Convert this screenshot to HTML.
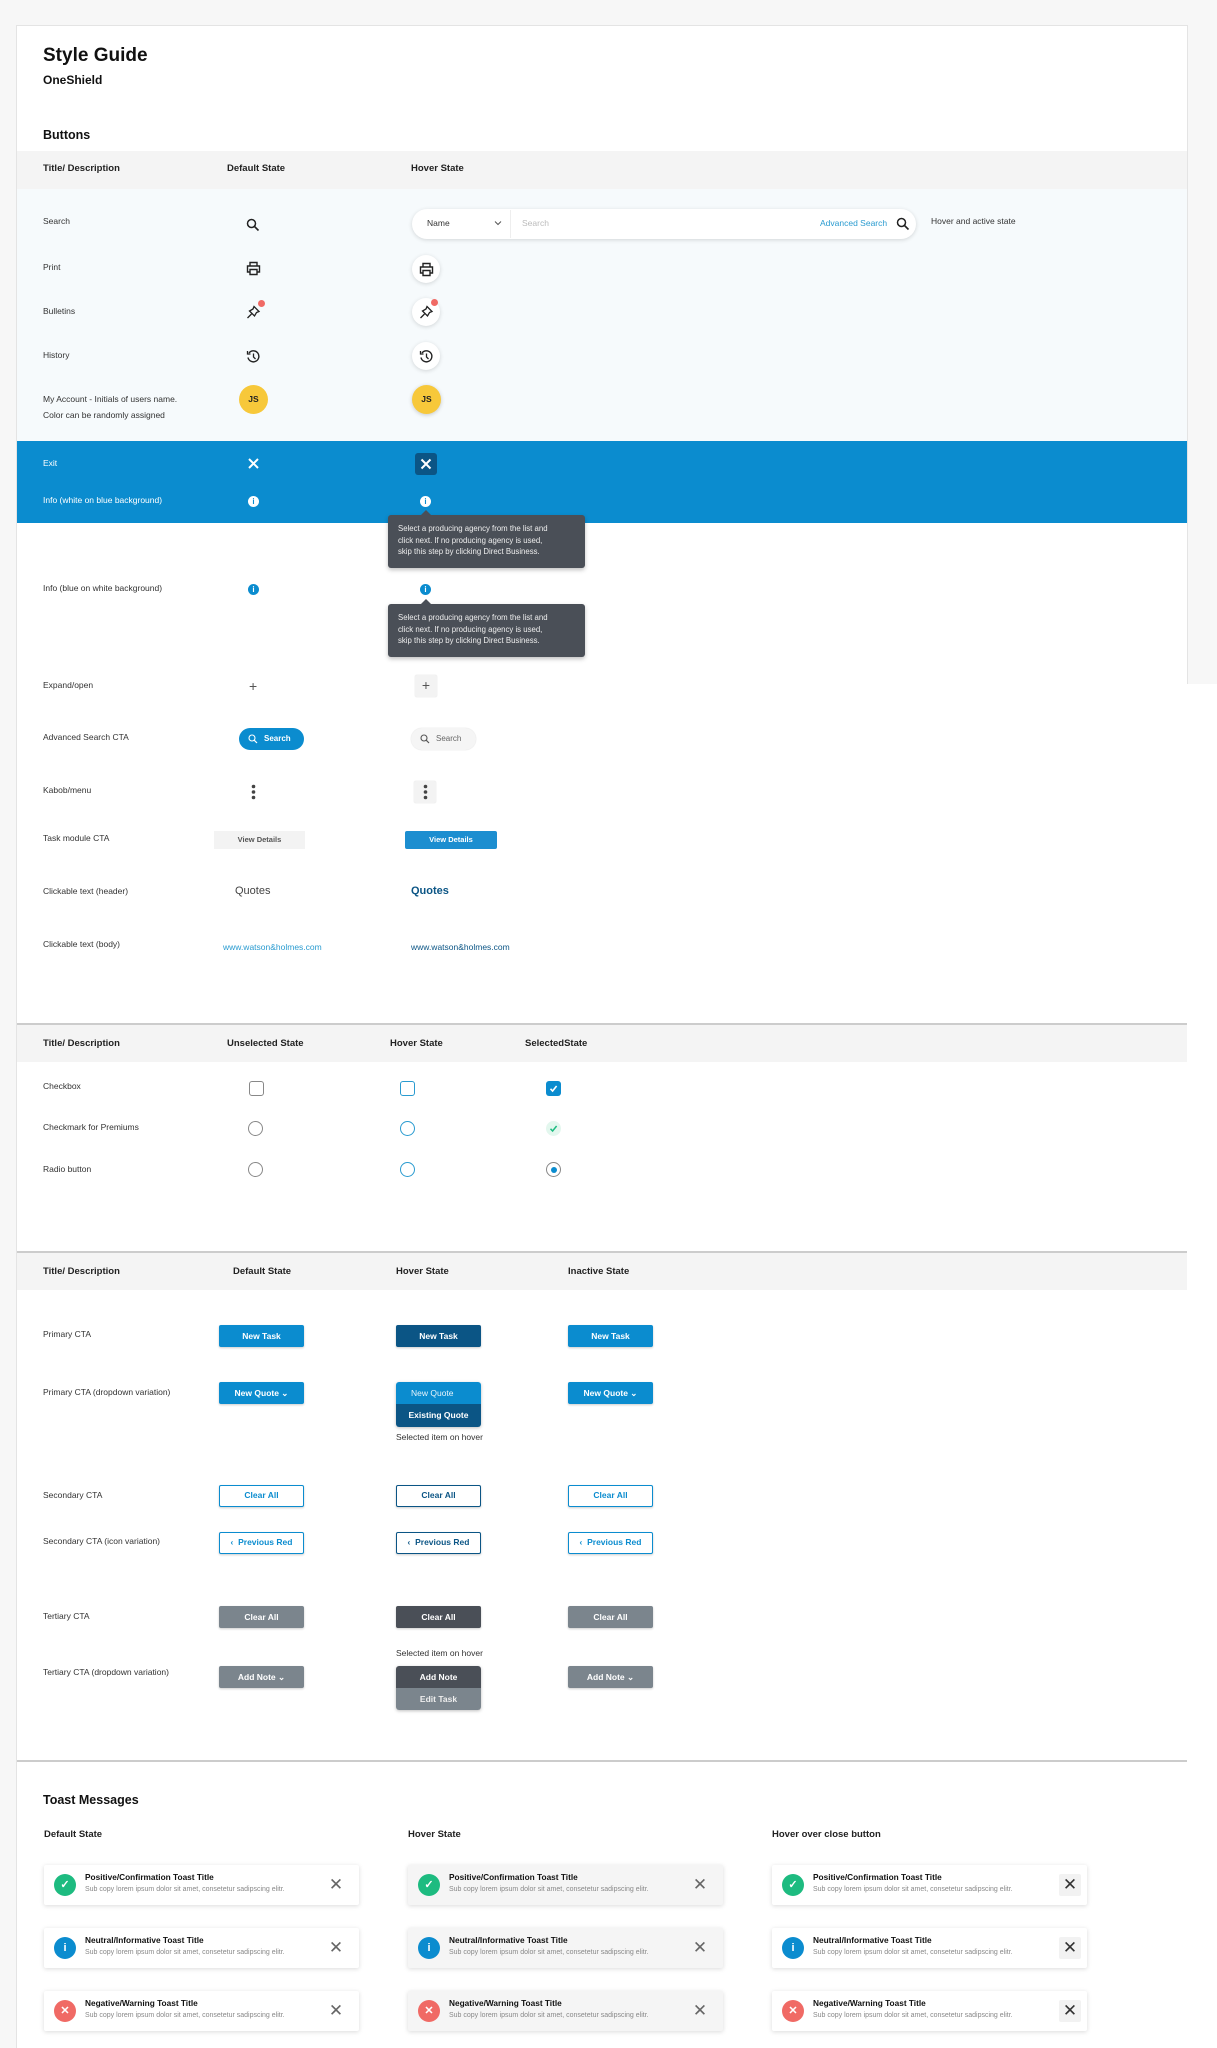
<!DOCTYPE html>
<html><head><meta charset="utf-8">
<style>
*{margin:0;padding:0;box-sizing:border-box}
body{width:1217px;height:2048px;background:linear-gradient(#f7f7f7 0,#f7f7f7 684px,#fff 684px);font-family:"Liberation Sans",sans-serif;color:#222;position:relative;overflow:hidden}
.a{position:absolute}
.t{position:absolute;white-space:nowrap;font-size:8.5px;line-height:11px;color:#333}
.h{position:absolute;white-space:nowrap;font-size:9.5px;line-height:12px;font-weight:bold;color:#222}
.btn{position:absolute;width:85px;height:22px;border-radius:2px;font-size:8.5px;font-weight:bold;line-height:22px;text-align:center;color:#fff;box-shadow:0 1px 2px rgba(0,0,0,.2)}
.pri{background:#0b8ccf}.prh{background:#0b5585}
.sec{background:#fff;border:1.5px solid #0b8ccf;color:#0b8ccf;line-height:19px}
.sech{background:#fff;border:1.5px solid #0b5585;color:#0b5585;line-height:19px}
.ter{background:#7b858d}.terh{background:#4a4f57}
.tip{position:absolute;width:197px;height:53px;background:#4a4f57;border-radius:3px;color:#eee;font-size:7.8px;line-height:11.5px;padding:8px 10px;box-shadow:0 2px 4px rgba(0,0,0,.25)}
.tip:before{content:"";position:absolute;left:33px;top:-5px;border:5px solid transparent;border-top:0;border-bottom-color:#4a4f57}
.toast{position:absolute;width:315px;height:40px;background:#fff;box-shadow:0 1px 5px rgba(0,0,0,.15);border-radius:2px}
.toast.hv{background:#f5f5f5}
.toast .ic{position:absolute;left:10px;top:9px;width:22px;height:22px;border-radius:50%;color:#fff;font-size:11px;font-weight:bold;text-align:center;line-height:22px}
.toast .tt{position:absolute;left:41px;top:7px;font-size:8.3px;font-weight:bold;color:#111;white-space:nowrap}
.toast .ts{position:absolute;left:41px;top:21px;font-size:7px;color:#888;white-space:nowrap}
.toast .x{position:absolute;right:12px;top:9px;width:22px;height:22px;text-align:center;line-height:22px;font-size:17px;color:#666}
.toast .x.b{background:#f2f2f2;border-radius:2px;color:#333;right:6px}
.g{background:#1dbb80}.i{background:#0b8ccf}.r{background:#f06a65}
.circ{position:absolute;width:28px;height:28px;border-radius:50%;background:#fff;box-shadow:0 1px 4px rgba(0,0,0,.15)}
</style></head><body>
<div class="a" style="left:0;top:0;width:16px;height:2048px;background:#f7f7f7"></div>
<div class="a" style="left:16px;top:25px;width:1172px;height:2023px;background:#fff;border-left:1px solid #e4e4e4;border-top:1px solid #e4e4e4"></div>
<div class="a" style="left:1187px;top:25px;width:1px;height:659px;background:#e4e4e4"></div>

<div class="t" style="left:43px;top:45px;font-size:19px;line-height:22px;font-weight:bold;color:#111">Style Guide</div>
<div class="t" style="left:43px;top:73px;font-size:12px;line-height:14px;font-weight:bold;color:#111">OneShield</div>
<div class="t" style="left:43px;top:128px;font-size:12.5px;line-height:15px;font-weight:bold;color:#111">Buttons</div>

<div class="a" style="left:17px;top:151px;width:1170px;height:38px;background:#f4f4f4"></div>
<div class="h" style="left:43px;top:163px">Title/ Description</div>
<div class="h" style="left:227px;top:163px">Default State</div>
<div class="h" style="left:411px;top:163px">Hover State</div>
<div class="a" style="left:17px;top:189px;width:1170px;height:252px;background:#f6fafc"></div>

<div class="t" style="left:43px;top:216px">Search</div>
<svg class="a" style="left:246px;top:218px" width="14" height="14" viewBox="0 0 14 14"><circle cx="5.5" cy="5.5" r="4" fill="none" stroke="#222" stroke-width="1.5"/><path d="M8.5 8.5L12.5 12.5" stroke="#222" stroke-width="1.6"/></svg>
<div class="a" style="left:412px;top:209px;width:504px;height:30px;background:#fff;border-radius:15px;box-shadow:0 1px 4px rgba(0,0,0,.15)"></div>
<div class="t" style="left:427px;top:218px;color:#333">Name</div>
<svg class="a" style="left:494px;top:220px" width="8" height="6" viewBox="0 0 8 6"><path d="M1 1.5L4 4.5L7 1.5" fill="none" stroke="#555" stroke-width="1"/></svg>
<div class="a" style="left:510px;top:210px;width:1px;height:28px;background:#eee"></div>
<div class="t" style="left:522px;top:218px;color:#bbb">Search</div>
<div class="t" style="left:820px;top:218px;color:#2a9bd0">Advanced Search</div>
<svg class="a" style="left:896px;top:217px" width="14" height="14" viewBox="0 0 14 14"><circle cx="5.5" cy="5.5" r="4" fill="none" stroke="#222" stroke-width="1.5"/><path d="M8.5 8.5L12.5 12.5" stroke="#222" stroke-width="1.6"/></svg>
<div class="t" style="left:931px;top:216px">Hover and active state</div>

<div class="t" style="left:43px;top:262px">Print</div>
<svg class="a" style="left:246px;top:261px" width="15" height="15" viewBox="0 0 15 15"><path d="M4 5V1.5h7V5M4 11H1.5V5h12v6H11M4 8.5h7v5H4z" fill="none" stroke="#222" stroke-width="1.4"/></svg>
<div class="circ" style="left:412px;top:255px"></div>
<svg class="a" style="left:419px;top:262px" width="15" height="15" viewBox="0 0 15 15"><path d="M4 5V1.5h7V5M4 11H1.5V5h12v6H11M4 8.5h7v5H4z" fill="none" stroke="#222" stroke-width="1.4"/></svg>

<div class="t" style="left:43px;top:306px">Bulletins</div>
<svg class="a" style="left:246px;top:305px" width="15" height="15" viewBox="0 0 15 15"><path d="M8 1.5L13 6.5L10.5 7.5L8.5 11L3.5 6L7 4z M5.5 9L1.5 13" fill="none" stroke="#222" stroke-width="1.3"/></svg>
<div class="a" style="left:258px;top:300px;width:7px;height:7px;border-radius:50%;background:#f06a65"></div>
<div class="circ" style="left:412px;top:298px"></div>
<svg class="a" style="left:419px;top:305px" width="15" height="15" viewBox="0 0 15 15"><path d="M8 1.5L13 6.5L10.5 7.5L8.5 11L3.5 6L7 4z M5.5 9L1.5 13" fill="none" stroke="#222" stroke-width="1.3"/></svg>
<div class="a" style="left:431px;top:299px;width:7px;height:7px;border-radius:50%;background:#f06a65"></div>

<div class="t" style="left:43px;top:350px">History</div>
<svg class="a" style="left:246px;top:349px" width="15" height="15" viewBox="0 0 15 15"><path d="M3 4A5.5 5.5 0 1 1 2 8.5" fill="none" stroke="#222" stroke-width="1.4"/><path d="M1.5 2V5H4.5" fill="none" stroke="#222" stroke-width="1.3"/><path d="M7.5 4.5V8L9.5 10" fill="none" stroke="#222" stroke-width="1.3"/></svg>
<div class="circ" style="left:412px;top:342px"></div>
<svg class="a" style="left:419px;top:349px" width="15" height="15" viewBox="0 0 15 15"><path d="M3 4A5.5 5.5 0 1 1 2 8.5" fill="none" stroke="#222" stroke-width="1.4"/><path d="M1.5 2V5H4.5" fill="none" stroke="#222" stroke-width="1.3"/><path d="M7.5 4.5V8L9.5 10" fill="none" stroke="#222" stroke-width="1.3"/></svg>

<div class="t" style="left:43px;top:391px;line-height:16px">My Account - Initials of users name.<br>Color can be randomly assigned</div>
<div class="a" style="left:239px;top:385px;width:29px;height:29px;border-radius:50%;background:#f7c83a;font-size:8.5px;font-weight:bold;text-align:center;line-height:29px">JS</div>
<div class="a" style="left:412px;top:385px;width:29px;height:29px;border-radius:50%;background:#f7c83a;font-size:8.5px;font-weight:bold;text-align:center;line-height:29px;box-shadow:0 1px 4px rgba(0,0,0,.2)">JS</div>

<div class="a" style="left:17px;top:441px;width:1170px;height:82px;background:#0b8ccf"></div>
<div class="t" style="left:43px;top:458px;color:#fff">Exit</div>
<svg class="a" style="left:247px;top:457px" width="13" height="13" viewBox="0 0 13 13"><path d="M2 2L11 11M11 2L2 11" stroke="#fff" stroke-width="2"/></svg>
<div class="a" style="left:415px;top:453px;width:22px;height:22px;border-radius:3px;background:#0b5585"></div>
<svg class="a" style="left:420px;top:458px" width="12" height="12" viewBox="0 0 12 12"><path d="M1.5 1.5L10.5 10.5M10.5 1.5L1.5 10.5" stroke="#fff" stroke-width="2"/></svg>
<div class="t" style="left:43px;top:495px;color:#fff">Info (white on blue background)</div>
<div class="a" style="left:248px;top:496px;width:11px;height:11px;border-radius:50%;background:#fff;color:#0b8ccf;font-size:8px;font-weight:bold;text-align:center;line-height:11px">i</div>
<div class="a" style="left:420px;top:496px;width:11px;height:11px;border-radius:50%;background:#fff;color:#0b8ccf;font-size:8px;font-weight:bold;text-align:center;line-height:11px">i</div>
<div class="tip" style="left:388px;top:515px">Select a producing agency from the list and<br>click next. If no producing agency is used,<br>skip this step by clicking Direct Business.</div>

<div class="t" style="left:43px;top:583px">Info (blue on white background)</div>
<div class="a" style="left:248px;top:584px;width:11px;height:11px;border-radius:50%;background:#0b8ccf;color:#fff;font-size:8px;font-weight:bold;text-align:center;line-height:11px">i</div>
<div class="a" style="left:420px;top:584px;width:11px;height:11px;border-radius:50%;background:#0b8ccf;color:#fff;font-size:8px;font-weight:bold;text-align:center;line-height:11px">i</div>
<div class="tip" style="left:388px;top:604px">Select a producing agency from the list and<br>click next. If no producing agency is used,<br>skip this step by clicking Direct Business.</div>

<div class="t" style="left:43px;top:680px">Expand/open</div>
<div class="t" style="left:249px;top:678px;font-size:14px;line-height:16px;color:#555">+</div>
<div class="a" style="left:415px;top:675px;width:22px;height:22px;border-radius:2px;background:#f3f3f3;box-shadow:0 0 1px rgba(0,0,0,.2);text-align:center;line-height:21px;font-size:14px;color:#555">+</div>

<div class="t" style="left:43px;top:732px">Advanced Search CTA</div>
<div class="a" style="left:239px;top:728px;width:65px;height:22px;border-radius:11px;background:#0b8ccf"></div>
<svg class="a" style="left:248px;top:734px" width="10" height="10" viewBox="0 0 10 10"><circle cx="4" cy="4" r="3" fill="none" stroke="#fff" stroke-width="1.1"/><path d="M6.2 6.2L9 9" stroke="#fff" stroke-width="1.2"/></svg>
<div class="t" style="left:264px;top:733px;color:#fff;font-weight:bold;font-size:8px">Search</div>
<div class="a" style="left:411px;top:728px;width:65px;height:22px;border-radius:11px;background:#f5f5f5;box-shadow:0 0 1px rgba(0,0,0,.2)"></div>
<svg class="a" style="left:420px;top:734px" width="10" height="10" viewBox="0 0 10 10"><circle cx="4" cy="4" r="3" fill="none" stroke="#555" stroke-width="1.1"/><path d="M6.2 6.2L9 9" stroke="#555" stroke-width="1.2"/></svg>
<div class="t" style="left:436px;top:733px;color:#666;font-size:8px">Search</div>

<div class="t" style="left:43px;top:785px">Kabob/menu</div>
<svg class="a" style="left:251px;top:784px" width="5" height="16" viewBox="0 0 5 16"><circle cx="2.5" cy="2.5" r="1.8" fill="#444"/><circle cx="2.5" cy="8" r="1.8" fill="#444"/><circle cx="2.5" cy="13.5" r="1.8" fill="#444"/></svg>
<div class="a" style="left:414px;top:781px;width:22px;height:22px;border-radius:2px;background:#f3f3f3;box-shadow:0 0 1px rgba(0,0,0,.2)"></div>
<svg class="a" style="left:423px;top:784px" width="5" height="16" viewBox="0 0 5 16"><circle cx="2.5" cy="2.5" r="1.8" fill="#444"/><circle cx="2.5" cy="8" r="1.8" fill="#444"/><circle cx="2.5" cy="13.5" r="1.8" fill="#444"/></svg>

<div class="t" style="left:43px;top:833px">Task module CTA</div>
<div class="a" style="left:214px;top:831px;width:91px;height:18px;background:#f3f3f3;font-size:7.5px;font-weight:bold;color:#555;text-align:center;line-height:18px">View Details</div>
<div class="a" style="left:405px;top:831px;width:92px;height:18px;background:#1c8ed0;border-radius:2px;font-size:7.5px;font-weight:bold;color:#fff;text-align:center;line-height:18px">View Details</div>

<div class="t" style="left:43px;top:886px">Clickable text (header)</div>
<div class="t" style="left:235px;top:884px;font-size:11px;line-height:14px;color:#444">Quotes</div>
<div class="t" style="left:411px;top:884px;font-size:11px;line-height:14px;color:#0b5585;font-weight:bold">Quotes</div>
<div class="t" style="left:43px;top:939px">Clickable text (body)</div>
<div class="t" style="left:223px;top:942px;color:#2a9bd0">www.watson&amp;holmes.com</div>
<div class="t" style="left:411px;top:942px;color:#0b5585">www.watson&amp;holmes.com</div>

<div class="a" style="left:17px;top:1023px;width:1170px;height:2px;background:#ccc"></div>
<div class="a" style="left:17px;top:1025px;width:1170px;height:37px;background:#f4f4f4"></div>
<div class="h" style="left:43px;top:1038px">Title/ Description</div>
<div class="h" style="left:227px;top:1038px">Unselected State</div>
<div class="h" style="left:390px;top:1038px">Hover State</div>
<div class="h" style="left:525px;top:1038px">SelectedState</div>
<div class="t" style="left:43px;top:1081px">Checkbox</div>
<div class="a" style="left:249px;top:1081px;width:15px;height:15px;border:1.5px solid #888;border-radius:3px"></div>
<div class="a" style="left:400px;top:1081px;width:15px;height:15px;border:1.5px solid #2a9bd0;border-radius:3px"></div>
<div class="a" style="left:546px;top:1081px;width:15px;height:15px;background:#0b8ccf;border-radius:3px"></div>
<svg class="a" style="left:549px;top:1084px" width="9" height="9" viewBox="0 0 9 9"><path d="M1.5 4.8L3.6 7L7.6 2" fill="none" stroke="#fff" stroke-width="1.6"/></svg>
<div class="t" style="left:43px;top:1122px">Checkmark for Premiums</div>
<div class="a" style="left:248px;top:1121px;width:15px;height:15px;border:1.5px solid #888;border-radius:50%"></div>
<div class="a" style="left:400px;top:1121px;width:15px;height:15px;border:1.5px solid #2a9bd0;border-radius:50%"></div>
<div class="a" style="left:546px;top:1121px;width:15px;height:15px;background:#e3f7ee;border-radius:50%"></div>
<svg class="a" style="left:549px;top:1124px" width="9" height="9" viewBox="0 0 9 9"><path d="M1.5 4.8L3.6 7L7.6 2" fill="none" stroke="#1dbb80" stroke-width="1.5"/></svg>
<div class="t" style="left:43px;top:1164px">Radio button</div>
<div class="a" style="left:248px;top:1162px;width:15px;height:15px;border:1.5px solid #888;border-radius:50%"></div>
<div class="a" style="left:400px;top:1162px;width:15px;height:15px;border:1.5px solid #2a9bd0;border-radius:50%"></div>
<div class="a" style="left:546px;top:1162px;width:15px;height:15px;border:1.5px solid #888;border-radius:50%"></div>
<div class="a" style="left:550.5px;top:1166.5px;width:6px;height:6px;background:#0b8ccf;border-radius:50%"></div>

<div class="a" style="left:17px;top:1251px;width:1170px;height:2px;background:#ccc"></div>
<div class="a" style="left:17px;top:1253px;width:1170px;height:37px;background:#f4f4f4"></div>
<div class="h" style="left:43px;top:1266px">Title/ Description</div>
<div class="h" style="left:233px;top:1266px">Default State</div>
<div class="h" style="left:396px;top:1266px">Hover State</div>
<div class="h" style="left:568px;top:1266px">Inactive State</div>

<div class="t" style="left:43px;top:1329px">Primary CTA</div>
<div class="btn pri" style="left:219px;top:1325px">New Task</div>
<div class="btn prh" style="left:396px;top:1325px">New Task</div>
<div class="btn pri" style="left:568px;top:1325px">New Task</div>

<div class="t" style="left:43px;top:1387px">Primary CTA (dropdown variation)</div>
<div class="btn pri" style="left:219px;top:1382px">New Quote &#8964;</div>
<div class="a" style="left:396px;top:1382px;width:85px;height:45px;border-radius:3px;overflow:hidden;box-shadow:0 1px 3px rgba(0,0,0,.25)">
<div style="height:22px;background:#0b8ccf;color:#e8f4fb;font-size:8.5px;line-height:22px;padding-left:15px">New Quote</div>
<div style="height:23px;background:#0b5585;color:#fff;font-size:8.5px;font-weight:bold;line-height:23px;text-align:center">Existing Quote</div></div>
<div class="t" style="left:396px;top:1432px;color:#333">Selected item on hover</div>
<div class="btn pri" style="left:568px;top:1382px">New Quote &#8964;</div>

<div class="t" style="left:43px;top:1490px">Secondary CTA</div>
<div class="btn sec" style="left:219px;top:1485px">Clear All</div>
<div class="btn sech" style="left:396px;top:1485px">Clear All</div>
<div class="btn sec" style="left:568px;top:1485px">Clear All</div>
<div class="t" style="left:43px;top:1536px">Secondary CTA (icon variation)</div>
<div class="btn sec" style="left:219px;top:1532px">&#8249;&nbsp; Previous Red</div>
<div class="btn sech" style="left:396px;top:1532px">&#8249;&nbsp; Previous Red</div>
<div class="btn sec" style="left:568px;top:1532px">&#8249;&nbsp; Previous Red</div>

<div class="t" style="left:43px;top:1611px">Tertiary CTA</div>
<div class="btn ter" style="left:219px;top:1606px">Clear All</div>
<div class="btn terh" style="left:396px;top:1606px">Clear All</div>
<div class="btn ter" style="left:568px;top:1606px">Clear All</div>
<div class="t" style="left:396px;top:1648px;color:#333">Selected item on hover</div>
<div class="t" style="left:43px;top:1667px">Tertiary CTA (dropdown variation)</div>
<div class="btn ter" style="left:219px;top:1666px">Add Note &#8964;</div>
<div class="a" style="left:396px;top:1666px;width:85px;height:44px;border-radius:3px;overflow:hidden;box-shadow:0 1px 3px rgba(0,0,0,.25)">
<div style="height:22px;background:#4a4f57;color:#fff;font-size:8.5px;font-weight:bold;line-height:22px;text-align:center">Add Note</div>
<div style="height:22px;background:#7b858d;color:#eee;font-size:8.5px;font-weight:bold;line-height:22px;text-align:center">Edit Task</div></div>
<div class="btn ter" style="left:568px;top:1666px">Add Note &#8964;</div>

<div class="a" style="left:17px;top:1760px;width:1170px;height:2px;background:#ccc"></div>
<div class="t" style="left:43px;top:1793px;font-size:12.5px;line-height:15px;font-weight:bold;color:#111">Toast Messages</div>
<div class="h" style="left:44px;top:1829px">Default State</div>
<div class="h" style="left:408px;top:1829px">Hover State</div>
<div class="h" style="left:772px;top:1829px">Hover over close button</div>

<div class="toast" style="left:44px;top:1865px"><div class="ic g">&#10003;</div><div class="tt">Positive/Confirmation Toast Title</div><div class="ts">Sub copy lorem ipsum dolor sit amet, consetetur sadipscing elitr.</div><div class="x">&#10005;</div></div>
<div class="toast hv" style="left:408px;top:1865px"><div class="ic g">&#10003;</div><div class="tt">Positive/Confirmation Toast Title</div><div class="ts">Sub copy lorem ipsum dolor sit amet, consetetur sadipscing elitr.</div><div class="x">&#10005;</div></div>
<div class="toast" style="left:772px;top:1865px"><div class="ic g">&#10003;</div><div class="tt">Positive/Confirmation Toast Title</div><div class="ts">Sub copy lorem ipsum dolor sit amet, consetetur sadipscing elitr.</div><div class="x b">&#10005;</div></div>

<div class="toast" style="left:44px;top:1928px"><div class="ic i">i</div><div class="tt">Neutral/Informative Toast Title</div><div class="ts">Sub copy lorem ipsum dolor sit amet, consetetur sadipscing elitr.</div><div class="x">&#10005;</div></div>
<div class="toast hv" style="left:408px;top:1928px"><div class="ic i">i</div><div class="tt">Neutral/Informative Toast Title</div><div class="ts">Sub copy lorem ipsum dolor sit amet, consetetur sadipscing elitr.</div><div class="x">&#10005;</div></div>
<div class="toast" style="left:772px;top:1928px"><div class="ic i">i</div><div class="tt">Neutral/Informative Toast Title</div><div class="ts">Sub copy lorem ipsum dolor sit amet, consetetur sadipscing elitr.</div><div class="x b">&#10005;</div></div>

<div class="toast" style="left:44px;top:1991px"><div class="ic r">&#10005;</div><div class="tt">Negative/Warning Toast Title</div><div class="ts">Sub copy lorem ipsum dolor sit amet, consetetur sadipscing elitr.</div><div class="x">&#10005;</div></div>
<div class="toast hv" style="left:408px;top:1991px"><div class="ic r">&#10005;</div><div class="tt">Negative/Warning Toast Title</div><div class="ts">Sub copy lorem ipsum dolor sit amet, consetetur sadipscing elitr.</div><div class="x">&#10005;</div></div>
<div class="toast" style="left:772px;top:1991px"><div class="ic r">&#10005;</div><div class="tt">Negative/Warning Toast Title</div><div class="ts">Sub copy lorem ipsum dolor sit amet, consetetur sadipscing elitr.</div><div class="x b">&#10005;</div></div>
</body></html>
